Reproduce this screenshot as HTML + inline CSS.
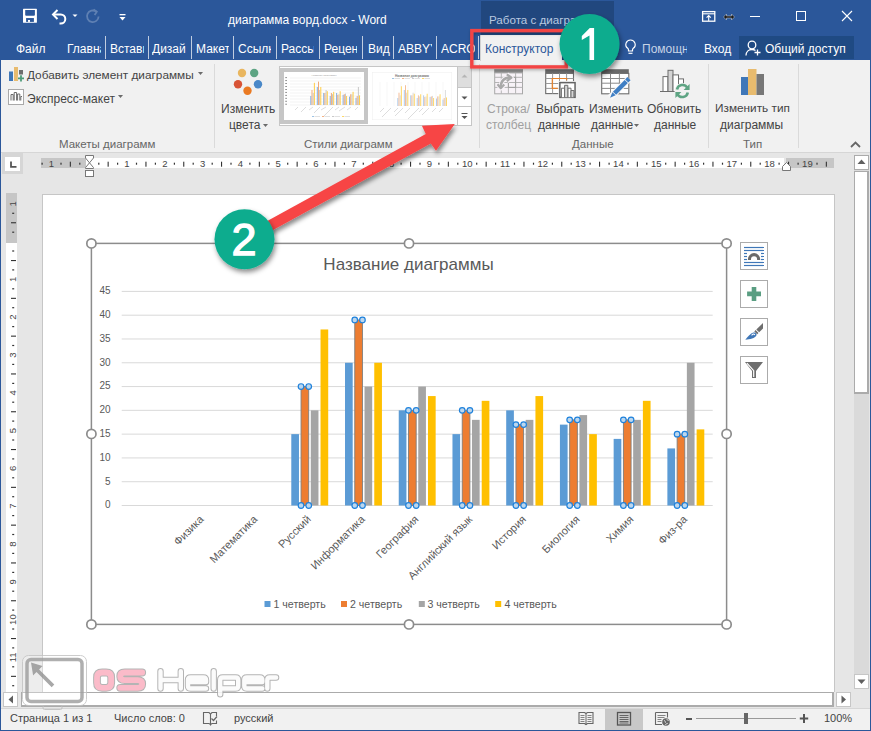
<!DOCTYPE html>
<html><head><meta charset="utf-8"><title>Word</title>
<style>
*{box-sizing:border-box}
html,body{margin:0;padding:0}
body{width:871px;height:731px;overflow:hidden;position:relative;background:#2b579a;font-family:"Liberation Sans",sans-serif;}
.a{position:absolute}
.t{position:absolute;white-space:nowrap;line-height:1}
.clip{overflow:hidden}
svg{position:absolute;overflow:visible}
</style></head><body>

<!-- ribbon bg -->
<div class="a" style="left:1px;top:60px;width:869px;height:93px;background:#f1f1f1;border-bottom:1px solid #d6d6d6"></div>
<!-- document workspace -->
<div class="a" style="left:1px;top:153px;width:869px;height:555px;background:#e6e6e6"></div>
<!-- page -->
<div class="a" style="left:42px;top:194px;width:793px;height:498px;background:#fff;border:1px solid #c6c6c6;border-bottom:none"></div>
<!-- status bar -->
<div class="a" style="left:1px;top:708px;width:869px;height:22px;background:#f1f1f1;border-top:1px solid #d6d6d6"></div>
<!-- tab selector -->
<div class="a" style="left:2px;top:153px;width:21px;height:21px;background:#d6d6d6"></div>
<div class="a" style="left:5px;top:157px;width:15px;height:14px;background:#fff"></div>
<svg style="left:10px;top:161px" width="7" height="7" viewBox="0 0 7 7"><path d="M1 0.5v5.3h5.5" fill="none" stroke="#555" stroke-width="1.8"/></svg>
<div class="a" style="left:41px;top:158px;width:44.5px;height:10px;background:#c6c6c6"></div>
<div class="a" style="left:786px;top:158px;width:48px;height:10px;background:#c6c6c6"></div>
<div class="a" style="left:86px;top:158px;width:698px;height:10px;background:#fff"></div>
<svg style="left:0;top:0" width="871" height="200" viewBox="0 0 871 200">
<rect x="41.5" y="162.7" width="1.2" height="2" fill="#333"/>
<text x="51.4" y="167" font-size="9.5" text-anchor="middle" fill="#444" font-family="Liberation Sans">1</text>
<rect x="60.4" y="162.7" width="1.2" height="2" fill="#333"/>
<rect x="69.8" y="161.7" width="1.1" height="5" fill="#333"/>
<rect x="79.2" y="162.7" width="1.2" height="2" fill="#333"/>
<rect x="98.2" y="162.7" width="1.2" height="2" fill="#333"/>
<rect x="107.6" y="161.7" width="1.1" height="5" fill="#333"/>
<rect x="117.0" y="162.7" width="1.2" height="2" fill="#333"/>
<text x="127.0" y="167" font-size="9.5" text-anchor="middle" fill="#444" font-family="Liberation Sans">1</text>
<rect x="135.9" y="162.7" width="1.2" height="2" fill="#333"/>
<rect x="145.4" y="161.7" width="1.1" height="5" fill="#333"/>
<rect x="154.8" y="162.7" width="1.2" height="2" fill="#333"/>
<text x="164.8" y="167" font-size="9.5" text-anchor="middle" fill="#444" font-family="Liberation Sans">2</text>
<rect x="173.8" y="162.7" width="1.2" height="2" fill="#333"/>
<rect x="183.2" y="161.7" width="1.1" height="5" fill="#333"/>
<rect x="192.6" y="162.7" width="1.2" height="2" fill="#333"/>
<text x="202.6" y="167" font-size="9.5" text-anchor="middle" fill="#444" font-family="Liberation Sans">3</text>
<rect x="211.6" y="162.7" width="1.2" height="2" fill="#333"/>
<rect x="221.0" y="161.7" width="1.1" height="5" fill="#333"/>
<rect x="230.4" y="162.7" width="1.2" height="2" fill="#333"/>
<text x="240.4" y="167" font-size="9.5" text-anchor="middle" fill="#444" font-family="Liberation Sans">4</text>
<rect x="249.3" y="162.7" width="1.2" height="2" fill="#333"/>
<rect x="258.8" y="161.7" width="1.1" height="5" fill="#333"/>
<rect x="268.2" y="162.7" width="1.2" height="2" fill="#333"/>
<text x="278.2" y="167" font-size="9.5" text-anchor="middle" fill="#444" font-family="Liberation Sans">5</text>
<rect x="287.1" y="162.7" width="1.2" height="2" fill="#333"/>
<rect x="296.6" y="161.7" width="1.1" height="5" fill="#333"/>
<rect x="306.1" y="162.7" width="1.2" height="2" fill="#333"/>
<text x="316.0" y="167" font-size="9.5" text-anchor="middle" fill="#444" font-family="Liberation Sans">6</text>
<rect x="324.9" y="162.7" width="1.2" height="2" fill="#333"/>
<rect x="334.4" y="161.7" width="1.1" height="5" fill="#333"/>
<rect x="343.8" y="162.7" width="1.2" height="2" fill="#333"/>
<text x="353.8" y="167" font-size="9.5" text-anchor="middle" fill="#444" font-family="Liberation Sans">7</text>
<rect x="362.7" y="162.7" width="1.2" height="2" fill="#333"/>
<rect x="372.2" y="161.7" width="1.1" height="5" fill="#333"/>
<rect x="381.6" y="162.7" width="1.2" height="2" fill="#333"/>
<text x="391.6" y="167" font-size="9.5" text-anchor="middle" fill="#444" font-family="Liberation Sans">8</text>
<rect x="400.5" y="162.7" width="1.2" height="2" fill="#333"/>
<rect x="410.0" y="161.7" width="1.1" height="5" fill="#333"/>
<rect x="419.4" y="162.7" width="1.2" height="2" fill="#333"/>
<text x="429.4" y="167" font-size="9.5" text-anchor="middle" fill="#444" font-family="Liberation Sans">9</text>
<rect x="438.3" y="162.7" width="1.2" height="2" fill="#333"/>
<rect x="447.8" y="161.7" width="1.1" height="5" fill="#333"/>
<rect x="457.2" y="162.7" width="1.2" height="2" fill="#333"/>
<text x="467.2" y="167" font-size="9.5" text-anchor="middle" fill="#444" font-family="Liberation Sans">10</text>
<rect x="476.1" y="162.7" width="1.2" height="2" fill="#333"/>
<rect x="485.6" y="161.7" width="1.1" height="5" fill="#333"/>
<rect x="495.0" y="162.7" width="1.2" height="2" fill="#333"/>
<text x="505.0" y="167" font-size="9.5" text-anchor="middle" fill="#444" font-family="Liberation Sans">11</text>
<rect x="513.9" y="162.7" width="1.2" height="2" fill="#333"/>
<rect x="523.4" y="161.7" width="1.1" height="5" fill="#333"/>
<rect x="532.9" y="162.7" width="1.2" height="2" fill="#333"/>
<text x="542.8" y="167" font-size="9.5" text-anchor="middle" fill="#444" font-family="Liberation Sans">12</text>
<rect x="551.8" y="162.7" width="1.2" height="2" fill="#333"/>
<rect x="561.2" y="161.7" width="1.1" height="5" fill="#333"/>
<rect x="570.6" y="162.7" width="1.2" height="2" fill="#333"/>
<text x="580.6" y="167" font-size="9.5" text-anchor="middle" fill="#444" font-family="Liberation Sans">13</text>
<rect x="589.5" y="162.7" width="1.2" height="2" fill="#333"/>
<rect x="599.0" y="161.7" width="1.1" height="5" fill="#333"/>
<rect x="608.5" y="162.7" width="1.2" height="2" fill="#333"/>
<text x="618.4" y="167" font-size="9.5" text-anchor="middle" fill="#444" font-family="Liberation Sans">14</text>
<rect x="627.4" y="162.7" width="1.2" height="2" fill="#333"/>
<rect x="636.8" y="161.7" width="1.1" height="5" fill="#333"/>
<rect x="646.2" y="162.7" width="1.2" height="2" fill="#333"/>
<text x="656.2" y="167" font-size="9.5" text-anchor="middle" fill="#444" font-family="Liberation Sans">15</text>
<rect x="665.1" y="162.7" width="1.2" height="2" fill="#333"/>
<rect x="674.6" y="161.7" width="1.1" height="5" fill="#333"/>
<rect x="684.0" y="162.7" width="1.2" height="2" fill="#333"/>
<text x="694.0" y="167" font-size="9.5" text-anchor="middle" fill="#444" font-family="Liberation Sans">16</text>
<rect x="703.0" y="162.7" width="1.2" height="2" fill="#333"/>
<rect x="712.4" y="161.7" width="1.1" height="5" fill="#333"/>
<rect x="721.9" y="162.7" width="1.2" height="2" fill="#333"/>
<text x="731.8" y="167" font-size="9.5" text-anchor="middle" fill="#444" font-family="Liberation Sans">17</text>
<rect x="740.8" y="162.7" width="1.2" height="2" fill="#333"/>
<rect x="750.2" y="161.7" width="1.1" height="5" fill="#333"/>
<rect x="759.6" y="162.7" width="1.2" height="2" fill="#333"/>
<text x="769.6" y="167" font-size="9.5" text-anchor="middle" fill="#444" font-family="Liberation Sans">18</text>
<rect x="778.5" y="162.7" width="1.2" height="2" fill="#333"/>
<rect x="788.0" y="161.7" width="1.1" height="5" fill="#333"/>
<rect x="797.5" y="162.7" width="1.2" height="2" fill="#333"/>
<text x="807.4" y="167" font-size="9.5" text-anchor="middle" fill="#444" font-family="Liberation Sans">19</text>
<rect x="816.4" y="162.7" width="1.2" height="2" fill="#333"/>
<rect x="825.8" y="161.7" width="1.1" height="5" fill="#333"/>
<path d="M85.5 155.5H93.5V158L89.5 162.8L93.5 167.6V168.5H85.5V167.6L89.5 162.8L85.5 158Z" fill="#fff" stroke="#777" stroke-width="1"/>
<rect x="85.5" y="170.5" width="8" height="6" fill="#fff" stroke="#777" stroke-width="1"/>
<path d="M782.5 170.5V166.5L786.5 162.5L790.5 166.5V170.5Z" fill="#fff" stroke="#777" stroke-width="1"/>
</svg>
<div class="a" style="left:6px;top:193px;width:11px;height:499px;background:#fff"></div>
<div class="a" style="left:6px;top:193px;width:11px;height:50px;background:#c6c6c6"></div>
<svg style="left:0;top:0" width="30" height="731" viewBox="0 0 30 731">
<text transform="translate(16 203.8) rotate(-90)" x="0" y="0" font-size="9.5" text-anchor="middle" fill="#444" font-family="Liberation Sans">1</text>
<rect x="12.2" y="212.7" width="2" height="1.2" fill="#333"/>
<rect x="11" y="222.2" width="5" height="1.1" fill="#333"/>
<rect x="12.2" y="231.6" width="2" height="1.2" fill="#333"/>
<rect x="12.2" y="250.4" width="2" height="1.2" fill="#333"/>
<rect x="11" y="260.0" width="5" height="1.1" fill="#333"/>
<rect x="12.2" y="269.3" width="2" height="1.2" fill="#333"/>
<text transform="translate(16 279.4) rotate(-90)" x="0" y="0" font-size="9.5" text-anchor="middle" fill="#444" font-family="Liberation Sans">1</text>
<rect x="12.2" y="288.2" width="2" height="1.2" fill="#333"/>
<rect x="11" y="297.8" width="5" height="1.1" fill="#333"/>
<rect x="12.2" y="307.1" width="2" height="1.2" fill="#333"/>
<text transform="translate(16 317.2) rotate(-90)" x="0" y="0" font-size="9.5" text-anchor="middle" fill="#444" font-family="Liberation Sans">2</text>
<rect x="12.2" y="326.0" width="2" height="1.2" fill="#333"/>
<rect x="11" y="335.6" width="5" height="1.1" fill="#333"/>
<rect x="12.2" y="344.9" width="2" height="1.2" fill="#333"/>
<text transform="translate(16 355.0) rotate(-90)" x="0" y="0" font-size="9.5" text-anchor="middle" fill="#444" font-family="Liberation Sans">3</text>
<rect x="12.2" y="363.8" width="2" height="1.2" fill="#333"/>
<rect x="11" y="373.4" width="5" height="1.1" fill="#333"/>
<rect x="12.2" y="382.8" width="2" height="1.2" fill="#333"/>
<text transform="translate(16 392.8) rotate(-90)" x="0" y="0" font-size="9.5" text-anchor="middle" fill="#444" font-family="Liberation Sans">4</text>
<rect x="12.2" y="401.6" width="2" height="1.2" fill="#333"/>
<rect x="11" y="411.2" width="5" height="1.1" fill="#333"/>
<rect x="12.2" y="420.5" width="2" height="1.2" fill="#333"/>
<text transform="translate(16 430.6) rotate(-90)" x="0" y="0" font-size="9.5" text-anchor="middle" fill="#444" font-family="Liberation Sans">5</text>
<rect x="12.2" y="439.4" width="2" height="1.2" fill="#333"/>
<rect x="11" y="449.0" width="5" height="1.1" fill="#333"/>
<rect x="12.2" y="458.3" width="2" height="1.2" fill="#333"/>
<text transform="translate(16 468.4) rotate(-90)" x="0" y="0" font-size="9.5" text-anchor="middle" fill="#444" font-family="Liberation Sans">6</text>
<rect x="12.2" y="477.2" width="2" height="1.2" fill="#333"/>
<rect x="11" y="486.8" width="5" height="1.1" fill="#333"/>
<rect x="12.2" y="496.1" width="2" height="1.2" fill="#333"/>
<text transform="translate(16 506.2) rotate(-90)" x="0" y="0" font-size="9.5" text-anchor="middle" fill="#444" font-family="Liberation Sans">7</text>
<rect x="12.2" y="515.0" width="2" height="1.2" fill="#333"/>
<rect x="11" y="524.6" width="5" height="1.1" fill="#333"/>
<rect x="12.2" y="533.9" width="2" height="1.2" fill="#333"/>
<text transform="translate(16 544.0) rotate(-90)" x="0" y="0" font-size="9.5" text-anchor="middle" fill="#444" font-family="Liberation Sans">8</text>
<rect x="12.2" y="552.8" width="2" height="1.2" fill="#333"/>
<rect x="11" y="562.4" width="5" height="1.1" fill="#333"/>
<rect x="12.2" y="571.8" width="2" height="1.2" fill="#333"/>
<text transform="translate(16 581.8) rotate(-90)" x="0" y="0" font-size="9.5" text-anchor="middle" fill="#444" font-family="Liberation Sans">9</text>
<rect x="12.2" y="590.6" width="2" height="1.2" fill="#333"/>
<rect x="11" y="600.2" width="5" height="1.1" fill="#333"/>
<rect x="12.2" y="609.5" width="2" height="1.2" fill="#333"/>
<text transform="translate(16 619.6) rotate(-90)" x="0" y="0" font-size="9.5" text-anchor="middle" fill="#444" font-family="Liberation Sans">10</text>
<rect x="12.2" y="628.4" width="2" height="1.2" fill="#333"/>
<rect x="11" y="638.0" width="5" height="1.1" fill="#333"/>
<rect x="12.2" y="647.3" width="2" height="1.2" fill="#333"/>
<text transform="translate(16 657.4) rotate(-90)" x="0" y="0" font-size="9.5" text-anchor="middle" fill="#444" font-family="Liberation Sans">11</text>
<rect x="12.2" y="666.2" width="2" height="1.2" fill="#333"/>
<rect x="11" y="675.8" width="5" height="1.1" fill="#333"/>
<rect x="12.2" y="685.1" width="2" height="1.2" fill="#333"/>
</svg>
<!-- vertical scrollbar -->
<div class="a" style="left:854px;top:155px;width:15px;height:534px;background:#dadada"></div>
<div class="a" style="left:854px;top:155px;width:15px;height:15px;background:#fff;border:1px solid #ababab"></div>
<svg style="left:857px;top:159px" width="9" height="6" viewBox="0 0 9 6"><path d="M0.5 5h8l-4-4.5z" fill="#5f5f5f"/></svg>
<div class="a" style="left:854px;top:171px;width:15px;height:223px;background:#fff;border:1px solid #ababab;border-width:1px 2px 2px 1px"></div>
<div class="a" style="left:854px;top:674px;width:15px;height:15px;background:#fff;border:1px solid #c6c6c6"></div>
<svg style="left:857px;top:679px" width="9" height="6" viewBox="0 0 9 6"><path d="M0.5 0.5h8l-4 4.5z" fill="#5f5f5f"/></svg>
<!-- horizontal scrollbar -->
<div class="a" style="left:1px;top:692px;width:853px;height:16px;background:#e6e6e6"></div>
<div class="a" style="left:3px;top:692px;width:15px;height:15px;background:#fff;border:1px solid #c6c6c6"></div>
<svg style="left:8px;top:695px" width="6" height="9" viewBox="0 0 6 9"><path d="M5 0.5v8l-4.5-4z" fill="#5f5f5f"/></svg>
<div class="a" style="left:21px;top:692px;width:813px;height:15px;background:#fff;border:1px solid #ababab;border-width:1px 2px 2px 1px"></div>
<div class="a" style="left:836px;top:692px;width:15px;height:15px;background:#fff;border:1px solid #c6c6c6"></div>
<svg style="left:841px;top:695px" width="6" height="9" viewBox="0 0 6 9"><path d="M0.5 0.5v8l4.5-4z" fill="#5f5f5f"/></svg>

<!-- ===== TITLE BAR ===== -->
<!-- save icon -->
<svg style="left:22px;top:8px" width="16" height="16" viewBox="0 0 16 16">
<rect x="1" y="0.75" width="13.9" height="14.1" rx="0.6" fill="#fff"/>
<path d="M3.2 2.1h9.7v5l-0.6 0.6h-8.5l-0.6-0.6z" fill="#2b579a"/>
<rect x="4.1" y="10.05" width="7.8" height="3.85" fill="#2b579a"/>
<rect x="6" y="12" width="2" height="1.9" fill="#fff"/>
</svg>
<!-- undo -->
<svg style="left:51px;top:8px" width="28" height="16" viewBox="0 0 28 16">
<path d="M3 6.5h6.8a4.5 4.5 0 0 1 0 9h-1.3" fill="none" stroke="#fff" stroke-width="2"/>
<path d="M6.5 2l-4.5 4.5 4.5 4.5" fill="none" stroke="#fff" stroke-width="2"/>
<path d="M21.5 6.5h5l-2.5 2.6z" fill="#fff"/>
</svg>
<!-- redo dim -->
<svg style="left:85px;top:8px" width="16" height="16" viewBox="0 0 16 16">
<path d="M11.2 3.6A5.8 5.8 0 1 0 13.6 8.5" fill="none" stroke="#5f80b3" stroke-width="1.8"/>
<path d="M8.6 1.4l3.2 2.4-2.2 3.2" fill="none" stroke="#5f80b3" stroke-width="1.8"/>
</svg>
<!-- customize -->
<svg style="left:119px;top:14px" width="7" height="8" viewBox="0 0 7 8">
<rect x="0.5" y="0" width="6" height="1.3" fill="#fff"/>
<path d="M0.5 3h6l-3 3.5z" fill="#fff"/>
</svg>
<div class="t" style="left:228px;top:14px;font-size:12px;color:#fff">диаграмма ворд.docx - Word</div>

<!-- contextual header -->
<div class="a" style="left:481px;top:1px;width:133px;height:34px;background:#21477e"></div>
<div class="t clip" style="left:489px;top:14px;width:111px;font-size:11.6px;color:#b9c9e0">Работа с диаграммами</div>

<!-- window controls -->
<svg style="left:701px;top:10px" width="16" height="13" viewBox="0 0 16 13">
<rect x="1.6" y="1.6" width="12.2" height="9.6" fill="none" stroke="#fff" stroke-width="1.3"/>
<line x1="1.5" y1="3.8" x2="14" y2="3.8" stroke="#fff" stroke-width="1.1"/>
<path d="M7.7 11V5.6M5.6 7.6L7.7 5.5 9.8 7.6" fill="none" stroke="#fff" stroke-width="1.1"/>
</svg>
<svg style="left:723px;top:13px" width="12" height="8" viewBox="0 0 12 8">
<path d="M0.5 4l3-3v2h5v-2l3 3-3 3v-2h-5v2z" fill="#1a1a1a" stroke="#fff" stroke-width="0.4"/>
</svg>
<div class="a" style="left:750px;top:16px;width:10px;height:1px;background:#fff"></div>
<div class="a" style="left:796px;top:11px;width:10px;height:10px;border:1px solid #fff"></div>
<svg style="left:841px;top:10px" width="12" height="12" viewBox="0 0 12 12">
<path d="M1 1l10 10M11 1l-10 10" stroke="#fff" stroke-width="1.1"/>
</svg>

<!-- ===== TABS ROW ===== -->
<div class="t" style="left:16px;top:43px;font-size:12px;color:#fff">Файл</div>
<div class="t clip" style="left:67px;top:43px;width:34px;font-size:12px;color:#fff">Главная</div>
<div class="t clip" style="left:110px;top:43px;width:34px;font-size:12px;color:#fff">Вставка</div>
<div class="t clip" style="left:152px;top:43px;width:33.5px;font-size:12px;color:#fff">Дизайн</div>
<div class="t clip" style="left:196px;top:43px;width:33px;font-size:12px;color:#fff">Макет</div>
<div class="t clip" style="left:238px;top:43px;width:33px;font-size:12px;color:#fff">Ссылки</div>
<div class="t clip" style="left:281px;top:43px;width:33px;font-size:12px;color:#fff">Рассылки</div>
<div class="t clip" style="left:324px;top:43px;width:33px;font-size:12px;color:#fff">Рецензирование</div>
<div class="t" style="left:368px;top:43px;font-size:12px;color:#fff">Вид</div>
<div class="t clip" style="left:398px;top:43px;width:34px;font-size:12px;color:#fff">ABBYY FineReader</div>
<div class="t clip" style="left:441px;top:43px;width:34px;font-size:12px;color:#fff">ACROBAT</div>
<!-- separators -->
<div class="a" style="left:105px;top:36px;width:1px;height:23px;background:#c0cde0"></div>
<div class="a" style="left:148px;top:36px;width:1px;height:23px;background:#c0cde0"></div>
<div class="a" style="left:191px;top:36px;width:1px;height:23px;background:#c0cde0"></div>
<div class="a" style="left:233px;top:36px;width:1px;height:23px;background:#c0cde0"></div>
<div class="a" style="left:276px;top:36px;width:1px;height:23px;background:#c0cde0"></div>
<div class="a" style="left:319px;top:36px;width:1px;height:23px;background:#c0cde0"></div>
<div class="a" style="left:362px;top:36px;width:1px;height:23px;background:#c0cde0"></div>
<div class="a" style="left:393px;top:36px;width:1px;height:23px;background:#c0cde0"></div>
<div class="a" style="left:436px;top:36px;width:1px;height:23px;background:#c0cde0"></div>
<div class="a" style="left:478px;top:36px;width:1px;height:23px;background:#c0cde0"></div>
<!-- Конструктор tab -->
<div class="a" style="left:480px;top:35px;width:82px;height:26px;background:#f1f1f1;border-left:1px solid #d2d2d2"></div>
<div class="t" style="left:485px;top:43px;font-size:12px;color:#2b579a">Конструктор</div>
<div class="a" style="left:562px;top:35px;width:52px;height:25px;background:#21477e"></div>

<!-- help -->
<svg style="left:624px;top:39px" width="13" height="16" viewBox="0 0 13 16">
<path d="M6.5 1a4.6 4.6 0 0 0-2.8 8.3c.6.5.8 1 .8 1.7v1h4v-1c0-.7.2-1.2.8-1.7A4.6 4.6 0 0 0 6.5 1z" fill="none" stroke="#fff" stroke-width="1.2"/>
<line x1="4.5" y1="14.3" x2="8.5" y2="14.3" stroke="#fff" stroke-width="1.2"/>
</svg>
<div class="t clip" style="left:642px;top:43px;width:45px;font-size:12px;color:#c7d3e6">Помощник</div>
<div class="t" style="left:704px;top:43px;font-size:12px;color:#fff">Вход</div>
<div class="a" style="left:739px;top:36px;width:115px;height:23px;background:#1f4a83"></div>
<svg style="left:745px;top:40px" width="17" height="16" viewBox="0 0 17 16">
<circle cx="7" cy="5" r="3.8" fill="none" stroke="#fff" stroke-width="1.3"/>
<path d="M1 15.5c0-3.5 2.5-6 6-6 1.5 0 2.6.4 3.5 1" fill="none" stroke="#fff" stroke-width="1.3"/>
<path d="M12.5 9.5v6M9.5 12.5h6" stroke="#fff" stroke-width="1.3"/>
</svg>
<div class="t" style="left:765px;top:43px;font-size:12px;color:#fff">Общий доступ</div>

<!-- ===== RIBBON ===== -->
<!-- Добавить элемент диаграммы -->
<svg style="left:8px;top:66px" width="17" height="16" viewBox="0 0 17 16">
<rect x="1" y="5.5" width="4" height="9.5" fill="#3f77b8"/>
<rect x="6" y="1" width="4" height="14" fill="#e8bb6e"/>
<rect x="11" y="4" width="4" height="4.5" fill="#6d6d6d"/>
<path d="M13 9v6.5M9.8 12.3h6.4" stroke="#f1f1f1" stroke-width="3.6"/><path d="M13 9.2v6.2M10 12.3h6" stroke="#4f9c7a" stroke-width="1.8"/>
</svg>
<div class="t" style="left:27px;top:70px;font-size:11.8px;color:#444">Добавить элемент диаграммы</div>
<svg style="left:198px;top:72px" width="6" height="4" viewBox="0 0 6 4"><path d="M0 0h5l-2.5 3z" fill="#6b6b6b"/></svg>
<!-- Экспресс-макет -->
<svg style="left:8px;top:89px" width="17" height="17" viewBox="0 0 17 17">
<rect x="0.5" y="0.5" width="15" height="15" fill="#fff" stroke="#a9a9a9"/>
<path d="M3 11.5v-6h2.2v6M6.2 11.5v-8h2.4v8M9.6 11.5v-6.5h2.2v6.5M12.8 11.5v-4h1.2" fill="none" stroke="#6a6a6a" stroke-width="1"/>
</svg>
<div class="t" style="left:27px;top:93px;font-size:12px;color:#444">Экспресс-макет</div>
<svg style="left:118px;top:95px" width="6" height="4" viewBox="0 0 6 4"><path d="M0 0h5l-2.5 3z" fill="#6b6b6b"/></svg>
<div class="t" style="left:59px;top:139px;font-size:11.5px;color:#666">Макеты диаграмм</div>
<div class="a" style="left:214px;top:64px;width:1px;height:84px;background:#dadada"></div>

<!-- Изменить цвета -->
<svg style="left:230px;top:64px" width="34" height="32" viewBox="0 0 34 32">
<circle cx="12" cy="9" r="4.2" fill="#e9b65f"/>
<circle cx="24.2" cy="9" r="4.2" fill="#5ea483"/>
<circle cx="8" cy="20.2" r="4.2" fill="#d85436"/>
<circle cx="28" cy="20.2" r="4.2" fill="#4a88c8"/>
<circle cx="17.5" cy="26.7" r="4.2" fill="#ea7a22"/>
</svg>
<div class="t" style="left:221px;top:103px;font-size:12px;color:#444">Изменить</div>
<div class="t" style="left:229px;top:119px;font-size:12px;color:#444">цвета</div>
<svg style="left:263px;top:124px" width="6" height="4" viewBox="0 0 6 4"><path d="M0 0h5l-2.5 3z" fill="#6b6b6b"/></svg>

<!-- Gallery -->
<div class="a" style="left:279px;top:66px;width:193px;height:60px;background:#fff;border:1px solid #c6c6c6"></div>
<div class="a" style="left:280px;top:68px;width:88px;height:56px;background:#c6c6c6"></div>
<div class="a" style="left:284px;top:72px;width:80px;height:48px;background:#fff"></div>
<svg style="left:284px;top:72px" width="80" height="48" viewBox="0 0 80 48">
<text x="40" y="4" font-size="2.5" text-anchor="middle" fill="#999" font-family="Liberation Sans">Название диаграммы</text>
<g stroke="#e6e6e6" stroke-width="0.5">
<line x1="6" y1="6" x2="77" y2="6"/><line x1="6" y1="9" x2="77" y2="9"/><line x1="6" y1="12" x2="77" y2="12"/>
<line x1="6" y1="15" x2="77" y2="15"/><line x1="6" y1="18" x2="77" y2="18"/><line x1="6" y1="21" x2="77" y2="21"/>
<line x1="6" y1="24" x2="77" y2="24"/><line x1="6" y1="27" x2="77" y2="27"/><line x1="6" y1="30" x2="77" y2="30"/><line x1="6" y1="33" x2="77" y2="33"/>
</g>
<g><rect x="1.3" y="5.20" width="1.6" height="0.9" fill="#777"/><rect x="1.3" y="8.15" width="1.6" height="0.9" fill="#777"/><rect x="1.3" y="11.10" width="1.6" height="0.9" fill="#777"/><rect x="1.3" y="14.05" width="1.6" height="0.9" fill="#777"/><rect x="1.3" y="17.00" width="1.6" height="0.9" fill="#777"/><rect x="1.3" y="19.95" width="1.6" height="0.9" fill="#777"/><rect x="1.3" y="22.90" width="1.6" height="0.9" fill="#777"/><rect x="1.3" y="25.85" width="1.6" height="0.9" fill="#777"/><rect x="1.3" y="28.80" width="1.6" height="0.9" fill="#777"/><rect x="1.3" y="31.75" width="1.6" height="0.9" fill="#777"/></g>
<g><rect x="26.37" y="24.00" width="0.92" height="9.00" fill="#7aa9dc"/><rect x="27.54" y="18.00" width="0.92" height="15.00" fill="#f0a36c"/><rect x="28.72" y="21.00" width="0.92" height="12.00" fill="#c4c4c4"/><rect x="29.89" y="10.80" width="0.92" height="22.20" fill="#ffcb3a"/><rect x="32.83" y="15.00" width="0.92" height="18.00" fill="#7aa9dc"/><rect x="34.00" y="9.60" width="0.92" height="23.40" fill="#f0a36c"/><rect x="35.17" y="18.00" width="0.92" height="15.00" fill="#c4c4c4"/><rect x="36.34" y="15.00" width="0.92" height="18.00" fill="#ffcb3a"/><rect x="39.28" y="21.00" width="0.92" height="12.00" fill="#7aa9dc"/><rect x="40.45" y="21.00" width="0.92" height="12.00" fill="#f0a36c"/><rect x="41.62" y="18.00" width="0.92" height="15.00" fill="#c4c4c4"/><rect x="42.80" y="19.20" width="0.92" height="13.80" fill="#ffcb3a"/><rect x="45.74" y="24.00" width="0.92" height="9.00" fill="#7aa9dc"/><rect x="46.91" y="21.00" width="0.92" height="12.00" fill="#f0a36c"/><rect x="48.08" y="22.20" width="0.92" height="10.80" fill="#c4c4c4"/><rect x="49.25" y="19.80" width="0.92" height="13.20" fill="#ffcb3a"/><rect x="52.19" y="21.00" width="0.92" height="12.00" fill="#7aa9dc"/><rect x="53.36" y="22.80" width="0.92" height="10.20" fill="#f0a36c"/><rect x="54.53" y="22.20" width="0.92" height="10.80" fill="#c4c4c4"/><rect x="55.70" y="19.20" width="0.92" height="13.80" fill="#ffcb3a"/><rect x="58.65" y="22.80" width="0.92" height="10.20" fill="#7aa9dc"/><rect x="59.82" y="22.20" width="0.92" height="10.80" fill="#f0a36c"/><rect x="60.99" y="21.60" width="0.92" height="11.40" fill="#c4c4c4"/><rect x="62.16" y="24.00" width="0.92" height="9.00" fill="#ffcb3a"/><rect x="65.10" y="24.60" width="0.92" height="8.40" fill="#7aa9dc"/><rect x="66.27" y="22.20" width="0.92" height="10.80" fill="#f0a36c"/><rect x="67.44" y="22.20" width="0.92" height="10.80" fill="#c4c4c4"/><rect x="68.61" y="19.80" width="0.92" height="13.20" fill="#ffcb3a"/><rect x="71.56" y="25.80" width="0.92" height="7.20" fill="#7aa9dc"/><rect x="72.73" y="24.00" width="0.92" height="9.00" fill="#f0a36c"/><rect x="73.90" y="15.00" width="0.92" height="18.00" fill="#c4c4c4"/><rect x="75.07" y="23.40" width="0.92" height="9.60" fill="#ffcb3a"/></g>
<g stroke="#bbb" stroke-width="0.5">
<line x1="11" y1="38" x2="14" y2="35"/><line x1="17" y1="40" x2="22" y2="35"/><line x1="25" y1="38" x2="29" y2="35"/><line x1="30" y1="41" x2="36" y2="35"/>
<line x1="37" y1="38" x2="42" y2="35"/><line x1="40" y1="44" x2="49" y2="35"/><line x1="51" y1="38" x2="55" y2="35"/><line x1="55" y1="39" x2="61" y2="35"/><line x1="63" y1="38" x2="67" y2="35"/><line x1="71" y1="38" x2="74" y2="35"/>
</g>
<g><rect x="28" y="44" width="2" height="1" fill="#9cc3e5"/><rect x="38" y="44" width="2" height="1" fill="#f4b183"/><rect x="48" y="44" width="2" height="1" fill="#c9c9c9"/><rect x="58" y="44" width="2" height="1" fill="#ffd966"/>
<g stroke="#ccc" stroke-width="0.6"><line x1="30.5" y1="44.5" x2="36" y2="44.5"/><line x1="40.5" y1="44.5" x2="46" y2="44.5"/><line x1="50.5" y1="44.5" x2="56" y2="44.5"/><line x1="60.5" y1="44.5" x2="66" y2="44.5"/></g></g>
</svg>
<svg style="left:372px;top:72px" width="80" height="48" viewBox="0 0 80 48">
<rect x="0.25" y="0.25" width="79.5" height="47.5" fill="none" stroke="#eee" stroke-width="0.5"/>
<text x="40" y="4.5" font-size="3.2" text-anchor="middle" fill="#777" font-family="Liberation Sans" font-weight="bold">Название диаграммы</text>
<g><rect x="20" y="6" width="2" height="1" fill="#9cc3e5"/><rect x="30" y="6" width="2" height="1" fill="#f4b183"/><rect x="40" y="6" width="2" height="1" fill="#c9c9c9"/><rect x="50" y="6" width="2" height="1" fill="#ffd966"/>
<g stroke="#ccc" stroke-width="0.6"><line x1="22.5" y1="6.5" x2="28" y2="6.5"/><line x1="32.5" y1="6.5" x2="38" y2="6.5"/><line x1="42.5" y1="6.5" x2="48" y2="6.5"/><line x1="52.5" y1="6.5" x2="58" y2="6.5"/></g></g>
<g stroke="#eee" stroke-width="0.5">
<line x1="8" y1="10" x2="8" y2="34"/><line x1="15" y1="10" x2="15" y2="34"/><line x1="22" y1="10" x2="22" y2="34"/><line x1="29" y1="10" x2="29" y2="34"/><line x1="36" y1="10" x2="36" y2="34"/><line x1="43" y1="10" x2="43" y2="34"/><line x1="50" y1="10" x2="50" y2="34"/><line x1="57" y1="10" x2="57" y2="34"/><line x1="64" y1="10" x2="64" y2="34"/><line x1="71" y1="10" x2="71" y2="34"/>
</g>
<g><rect x="25.37" y="26.00" width="0.92" height="8.00" fill="#a9c8ea"/><rect x="26.54" y="20.67" width="0.92" height="13.33" fill="#f4b990"/><rect x="27.72" y="23.33" width="0.92" height="10.67" fill="#d8d8d8"/><rect x="28.89" y="14.27" width="0.92" height="19.73" fill="#ffd45a"/><rect x="31.83" y="18.00" width="0.92" height="16.00" fill="#a9c8ea"/><rect x="33.00" y="13.20" width="0.92" height="20.80" fill="#f4b990"/><rect x="34.17" y="20.67" width="0.92" height="13.33" fill="#d8d8d8"/><rect x="35.34" y="18.00" width="0.92" height="16.00" fill="#ffd45a"/><rect x="38.28" y="23.33" width="0.92" height="10.67" fill="#a9c8ea"/><rect x="39.45" y="23.33" width="0.92" height="10.67" fill="#f4b990"/><rect x="40.62" y="20.67" width="0.92" height="13.33" fill="#d8d8d8"/><rect x="41.80" y="21.73" width="0.92" height="12.27" fill="#ffd45a"/><rect x="44.74" y="26.00" width="0.92" height="8.00" fill="#a9c8ea"/><rect x="45.91" y="23.33" width="0.92" height="10.67" fill="#f4b990"/><rect x="47.08" y="24.40" width="0.92" height="9.60" fill="#d8d8d8"/><rect x="48.25" y="22.27" width="0.92" height="11.73" fill="#ffd45a"/><rect x="51.19" y="23.33" width="0.92" height="10.67" fill="#a9c8ea"/><rect x="52.36" y="24.93" width="0.92" height="9.07" fill="#f4b990"/><rect x="53.53" y="24.40" width="0.92" height="9.60" fill="#d8d8d8"/><rect x="54.70" y="21.73" width="0.92" height="12.27" fill="#ffd45a"/><rect x="57.65" y="24.93" width="0.92" height="9.07" fill="#a9c8ea"/><rect x="58.82" y="24.40" width="0.92" height="9.60" fill="#f4b990"/><rect x="59.99" y="23.87" width="0.92" height="10.13" fill="#d8d8d8"/><rect x="61.16" y="26.00" width="0.92" height="8.00" fill="#ffd45a"/><rect x="64.10" y="26.53" width="0.92" height="7.47" fill="#a9c8ea"/><rect x="65.27" y="24.40" width="0.92" height="9.60" fill="#f4b990"/><rect x="66.44" y="24.40" width="0.92" height="9.60" fill="#d8d8d8"/><rect x="67.61" y="22.27" width="0.92" height="11.73" fill="#ffd45a"/><rect x="70.56" y="27.60" width="0.92" height="6.40" fill="#a9c8ea"/><rect x="71.73" y="26.00" width="0.92" height="8.00" fill="#f4b990"/><rect x="72.90" y="18.00" width="0.92" height="16.00" fill="#d8d8d8"/><rect x="74.07" y="25.47" width="0.92" height="8.53" fill="#ffd45a"/></g>
<g stroke="#bbb" stroke-width="0.5">
<line x1="8" y1="40" x2="12" y2="36"/><line x1="10" y1="45" x2="19" y2="36"/><line x1="22" y1="40" x2="26" y2="36"/><line x1="23" y1="44" x2="31" y2="36"/>
<line x1="33" y1="41" x2="38" y2="36"/><line x1="36" y1="47" x2="47" y2="36"/><line x1="47" y1="40" x2="51" y2="36"/><line x1="50" y1="43" x2="57" y2="36"/><line x1="60" y1="40" x2="64" y2="36"/><line x1="67" y1="40" x2="71" y2="36"/>
</g>
</svg>
<!-- gallery scroll buttons -->
<div class="a" style="left:457px;top:66px;width:15px;height:22px;background:#dedede;border:1px solid #c6c6c6"></div>
<div class="a" style="left:457px;top:87px;width:15px;height:20px;background:#fff;border:1px solid #c6c6c6"></div>
<div class="a" style="left:457px;top:106px;width:15px;height:20px;background:#fff;border:1px solid #c6c6c6"></div>
<svg style="left:461px;top:74px" width="7" height="4" viewBox="0 0 7 4"><path d="M0.5 3.5h6l-3-3z" fill="#b5b5b5"/></svg>
<svg style="left:461px;top:96px" width="7" height="4" viewBox="0 0 7 4"><path d="M0.5 0.5h6l-3 3z" fill="#555"/></svg>
<svg style="left:461px;top:113px" width="7" height="7" viewBox="0 0 7 7"><rect x="0.5" y="0" width="6" height="1" fill="#555"/><path d="M0.5 3h6l-3 3z" fill="#555"/></svg>
<div class="t" style="left:304px;top:139px;font-size:11.5px;color:#666">Стили диаграмм</div>
<div class="a" style="left:479px;top:64px;width:1px;height:84px;background:#dadada"></div>

<!-- Строка/столбец (disabled) -->
<svg style="left:493px;top:69px" width="31" height="27" viewBox="0 0 31 27">
<rect x="1.2" y="0.2" width="28.8" height="3.8" fill="#8e8e8e"/>
<rect x="1.7" y="3.9" width="27.8" height="20.9" fill="#f7f2f7" stroke="#a8a8a8" stroke-width="1"/>
<g stroke="#b4b4b4" stroke-width="1"><line x1="1.7" y1="8.3" x2="29.5" y2="8.3"/><line x1="1.7" y1="13.5" x2="29.5" y2="13.5"/><line x1="1.7" y1="18.4" x2="29.5" y2="18.4"/>
<line x1="8.3" y1="3.9" x2="8.3" y2="24.8"/><line x1="15.4" y1="3.9" x2="15.4" y2="24.8"/><line x1="22.6" y1="3.9" x2="22.6" y2="24.8"/></g>
<rect x="15.4" y="8.3" width="7.2" height="10.1" fill="none" stroke="#a0a0a0" stroke-width="1"/>
<g fill="none" stroke-linejoin="round" stroke-linecap="butt">
<path d="M7.8 18.5C7.8 12 11 8.6 17.5 8.6M13.8 5.3L18.5 8.7L13.8 12.2M4.5 15.3L7.8 19.2L11.3 15.6" stroke="#f7f2f7" stroke-width="4.4"/>
<path d="M7.8 18.5C7.8 12 11 8.6 17.5 8.6" stroke="#a9a9a9" stroke-width="2.5"/>
<path d="M13.8 5.3L18.5 8.7L13.8 12.2M4.5 15.3L7.8 19.2L11.3 15.6" stroke="#a9a9a9" stroke-width="2.1"/>
</g>
</svg>
<div class="t" style="left:487px;top:103px;font-size:12px;color:#a0a0a0">Строка/</div>
<div class="t" style="left:486px;top:119px;font-size:12px;color:#a0a0a0">столбец</div>
<!-- Выбрать данные -->
<svg style="left:545px;top:68px" width="33" height="31" viewBox="0 0 33 31">
<rect x="0.2" y="1.2" width="28.8" height="4.3" fill="#6a6a6a"/>
<rect x="0.7" y="5.4" width="27.8" height="20.2" fill="#fff" stroke="#6d6d6d" stroke-width="1.1"/>
<g stroke="#9a9a9a" stroke-width="1"><line x1="0.7" y1="10.5" x2="28.5" y2="10.5"/><line x1="0.7" y1="15.5" x2="28.5" y2="15.5"/><line x1="0.7" y1="20.4" x2="28.5" y2="20.4"/>
<line x1="7.6" y1="5.4" x2="7.6" y2="25.6"/><line x1="14.5" y1="5.4" x2="14.5" y2="25.6"/><line x1="21.6" y1="5.4" x2="21.6" y2="25.6"/></g>
<path d="M21.6 12.3V10.5H7.3V20.4H12.7" fill="none" stroke="#e8832c" stroke-width="1.2"/>
<rect x="14.85" y="14.65" width="15.2" height="14.7" fill="#fff" stroke="#f1f1f1" stroke-width="3.2"/><rect x="14.85" y="14.65" width="15.2" height="14.7" fill="#fff" stroke="#646464" stroke-width="1.5"/>
<path d="M16.4 29.3V20.2H19.6V29.3M22.8 29.3V20.2H26V29.3" fill="#fff" stroke="#6d6d6d" stroke-width="1"/>
<path d="M19.6 29.3V17.3H22.8V29.3M26 29.3V22.5H28.9V29.3" fill="#d6d6d6" stroke="#6d6d6d" stroke-width="1"/>
</svg>
<div class="t" style="left:536px;top:103px;font-size:12px;color:#444">Выбрать</div>
<div class="t" style="left:538px;top:119px;font-size:12px;color:#444">данные</div>
<!-- Изменить данные -->
<svg style="left:600px;top:68px" width="32" height="31" viewBox="0 0 32 31">
<rect x="1.2" y="1.2" width="27.6" height="4.3" fill="#6a6a6a"/>
<rect x="1.7" y="5.4" width="27.1" height="20.4" fill="#fff" stroke="#6d6d6d" stroke-width="1.1"/>
<g stroke="#8a8a8a" stroke-width="1"><line x1="1.7" y1="10.5" x2="28.8" y2="10.5"/><line x1="1.7" y1="15.2" x2="28.8" y2="15.2"/><line x1="1.7" y1="20.4" x2="28.8" y2="20.4"/>
<line x1="10.5" y1="5.4" x2="10.5" y2="25.8"/><line x1="19.4" y1="5.4" x2="19.4" y2="25.8"/></g>
<path d="M29 10.7L10 29.8" stroke="#f7f7f7" stroke-width="6.5"/>
<path d="M29 10.7L26.74 12.97M26.25 13.47L14.55 25.23" stroke="#3f7fc4" stroke-width="4.5"/>
<path d="M15.65 27.32L12.46 24.14L10.04 29.77Z" fill="#3f7fc4"/>
</svg>
<div class="t" style="left:589px;top:103px;font-size:12px;color:#444">Изменить</div>
<div class="t" style="left:591px;top:119px;font-size:12px;color:#444">данные</div>
<svg style="left:634px;top:124px" width="6" height="4" viewBox="0 0 6 4"><path d="M0 0h5l-2.5 3z" fill="#6b6b6b"/></svg>
<!-- Обновить данные -->
<svg style="left:659px;top:69px" width="32" height="30" viewBox="0 0 32 30">
<path d="M1 22.5h23" stroke="#6d6d6d" stroke-width="1"/>
<rect x="4" y="7.6" width="5" height="14.9" fill="#fff" stroke="#6d6d6d" stroke-width="1"/>
<rect x="9" y="1.3" width="5" height="21.2" fill="#d4d4d4" stroke="#6d6d6d" stroke-width="1"/>
<rect x="14" y="5.9" width="5.5" height="16.6" fill="#fff" stroke="#6d6d6d" stroke-width="1"/>
<rect x="19.5" y="9.9" width="5" height="12.6" fill="#fff" stroke="#6d6d6d" stroke-width="1"/>
<circle cx="23.5" cy="22" r="8" fill="#f1f1f1"/>
<path d="M18 20.5a5.6 5.6 0 0 1 10.3-1.8M28.8 23.5a5.6 5.6 0 0 1-10.3 1.8" fill="none" stroke="#5ea483" stroke-width="2.6"/>
<path d="M30.6 15v6h-6zM16.4 29v-6h6z" fill="#5ea483"/>
</svg>
<div class="t" style="left:647px;top:103px;font-size:12px;color:#444">Обновить</div>
<div class="t" style="left:654px;top:119px;font-size:12px;color:#444">данные</div>
<div class="t" style="left:572px;top:139px;font-size:11.5px;color:#666">Данные</div>
<div class="a" style="left:708px;top:64px;width:1px;height:84px;background:#dadada"></div>
<!-- Изменить тип -->
<svg style="left:740px;top:68px" width="25" height="28" viewBox="0 0 25 28">
<rect x="1" y="9" width="7" height="18" fill="#3f77b8"/>
<rect x="8" y="1" width="8.5" height="26" fill="#e8bb6e"/>
<rect x="16.5" y="6" width="7.5" height="21" fill="#777"/>
</svg>
<div class="t" style="left:715px;top:103px;font-size:11.8px;color:#444">Изменить тип</div>
<div class="t" style="left:720px;top:119px;font-size:12px;color:#444">диаграммы</div>
<div class="t" style="left:743px;top:139px;font-size:11.5px;color:#666">Тип</div>
<div class="a" style="left:798px;top:64px;width:1px;height:84px;background:#dadada"></div>
<svg style="left:850px;top:141px" width="11" height="7" viewBox="0 0 11 7"><path d="M1 6l4.5-4.5L10 6" fill="none" stroke="#666" stroke-width="1.8"/></svg>

<svg style="left:0;top:0" width="871" height="731" viewBox="0 0 871 731">
<text x="408.5" y="270" font-size="17" text-anchor="middle" fill="#595959" font-family="Liberation Sans">Название диаграммы</text>
<rect x="121.7" y="505.00" width="591.0" height="1" fill="#d9d9d9"/>
<text x="110.6" y="508.40" font-size="10" text-anchor="end" fill="#595959" font-family="Liberation Sans">0</text>
<rect x="121.7" y="481.21" width="591.0" height="1" fill="#d9d9d9"/>
<text x="110.6" y="484.61" font-size="10" text-anchor="end" fill="#595959" font-family="Liberation Sans">5</text>
<rect x="121.7" y="457.42" width="591.0" height="1" fill="#d9d9d9"/>
<text x="110.6" y="460.82" font-size="10" text-anchor="end" fill="#595959" font-family="Liberation Sans">10</text>
<rect x="121.7" y="433.63" width="591.0" height="1" fill="#d9d9d9"/>
<text x="110.6" y="437.03" font-size="10" text-anchor="end" fill="#595959" font-family="Liberation Sans">15</text>
<rect x="121.7" y="409.84" width="591.0" height="1" fill="#d9d9d9"/>
<text x="110.6" y="413.24" font-size="10" text-anchor="end" fill="#595959" font-family="Liberation Sans">20</text>
<rect x="121.7" y="386.06" width="591.0" height="1" fill="#d9d9d9"/>
<text x="110.6" y="389.46" font-size="10" text-anchor="end" fill="#595959" font-family="Liberation Sans">25</text>
<rect x="121.7" y="362.27" width="591.0" height="1" fill="#d9d9d9"/>
<text x="110.6" y="365.67" font-size="10" text-anchor="end" fill="#595959" font-family="Liberation Sans">30</text>
<rect x="121.7" y="338.48" width="591.0" height="1" fill="#d9d9d9"/>
<text x="110.6" y="341.88" font-size="10" text-anchor="end" fill="#595959" font-family="Liberation Sans">35</text>
<rect x="121.7" y="314.69" width="591.0" height="1" fill="#d9d9d9"/>
<text x="110.6" y="318.09" font-size="10" text-anchor="end" fill="#595959" font-family="Liberation Sans">40</text>
<rect x="121.7" y="290.90" width="591.0" height="1" fill="#d9d9d9"/>
<text x="110.6" y="294.30" font-size="10" text-anchor="end" fill="#595959" font-family="Liberation Sans">45</text>
<text transform="translate(204.3 520) rotate(-45)" text-anchor="end" font-size="11" fill="#595959" font-family="Liberation Sans">Физика</text>
<text transform="translate(258.0 520) rotate(-45)" text-anchor="end" font-size="11" fill="#595959" font-family="Liberation Sans">Математика</text>
<text transform="translate(311.7 520) rotate(-45)" text-anchor="end" font-size="11" fill="#595959" font-family="Liberation Sans">Русский</text>
<rect x="291.29" y="434.13" width="7.68" height="71.37" fill="#5b9bd5"/>
<rect x="301.03" y="386.56" width="7.68" height="118.94" fill="#ed7d31" stroke="#7f7f7f" stroke-width="0.9"/>
<rect x="310.78" y="410.34" width="7.68" height="95.16" fill="#a5a5a5"/>
<rect x="320.53" y="329.46" width="7.68" height="176.04" fill="#ffc000"/>
<text transform="translate(365.5 520) rotate(-45)" text-anchor="end" font-size="11" fill="#595959" font-family="Liberation Sans">Информатика</text>
<rect x="345.01" y="362.77" width="7.68" height="142.73" fill="#5b9bd5"/>
<rect x="354.76" y="319.95" width="7.68" height="185.55" fill="#ed7d31" stroke="#7f7f7f" stroke-width="0.9"/>
<rect x="364.51" y="386.56" width="7.68" height="118.94" fill="#a5a5a5"/>
<rect x="374.26" y="362.77" width="7.68" height="142.73" fill="#ffc000"/>
<text transform="translate(419.2 520) rotate(-45)" text-anchor="end" font-size="11" fill="#595959" font-family="Liberation Sans">География</text>
<rect x="398.74" y="410.34" width="7.68" height="95.16" fill="#5b9bd5"/>
<rect x="408.49" y="410.34" width="7.68" height="95.16" fill="#ed7d31" stroke="#7f7f7f" stroke-width="0.9"/>
<rect x="418.24" y="386.56" width="7.68" height="118.94" fill="#a5a5a5"/>
<rect x="427.98" y="396.07" width="7.68" height="109.43" fill="#ffc000"/>
<text transform="translate(472.9 520) rotate(-45)" text-anchor="end" font-size="11" fill="#595959" font-family="Liberation Sans">Английский язык</text>
<rect x="452.47" y="434.13" width="7.68" height="71.37" fill="#5b9bd5"/>
<rect x="462.22" y="410.34" width="7.68" height="95.16" fill="#ed7d31" stroke="#7f7f7f" stroke-width="0.9"/>
<rect x="471.96" y="419.86" width="7.68" height="85.64" fill="#a5a5a5"/>
<rect x="481.71" y="400.83" width="7.68" height="104.67" fill="#ffc000"/>
<text transform="translate(526.7 520) rotate(-45)" text-anchor="end" font-size="11" fill="#595959" font-family="Liberation Sans">История</text>
<rect x="506.20" y="410.34" width="7.68" height="95.16" fill="#5b9bd5"/>
<rect x="515.94" y="424.62" width="7.68" height="80.88" fill="#ed7d31" stroke="#7f7f7f" stroke-width="0.9"/>
<rect x="525.69" y="419.86" width="7.68" height="85.64" fill="#a5a5a5"/>
<rect x="535.44" y="396.07" width="7.68" height="109.43" fill="#ffc000"/>
<text transform="translate(580.4 520) rotate(-45)" text-anchor="end" font-size="11" fill="#595959" font-family="Liberation Sans">Биология</text>
<rect x="559.92" y="424.62" width="7.68" height="80.88" fill="#5b9bd5"/>
<rect x="569.67" y="419.86" width="7.68" height="85.64" fill="#ed7d31" stroke="#7f7f7f" stroke-width="0.9"/>
<rect x="579.42" y="415.10" width="7.68" height="90.40" fill="#a5a5a5"/>
<rect x="589.17" y="434.13" width="7.68" height="71.37" fill="#ffc000"/>
<text transform="translate(634.1 520) rotate(-45)" text-anchor="end" font-size="11" fill="#595959" font-family="Liberation Sans">Химия</text>
<rect x="613.65" y="438.89" width="7.68" height="66.61" fill="#5b9bd5"/>
<rect x="623.40" y="419.86" width="7.68" height="85.64" fill="#ed7d31" stroke="#7f7f7f" stroke-width="0.9"/>
<rect x="633.15" y="419.86" width="7.68" height="85.64" fill="#a5a5a5"/>
<rect x="642.89" y="400.83" width="7.68" height="104.67" fill="#ffc000"/>
<text transform="translate(687.8 520) rotate(-45)" text-anchor="end" font-size="11" fill="#595959" font-family="Liberation Sans">Физ-ра</text>
<rect x="667.38" y="448.41" width="7.68" height="57.09" fill="#5b9bd5"/>
<rect x="677.12" y="434.13" width="7.68" height="71.37" fill="#ed7d31" stroke="#7f7f7f" stroke-width="0.9"/>
<rect x="686.87" y="362.77" width="7.68" height="142.73" fill="#a5a5a5"/>
<rect x="696.62" y="429.38" width="7.68" height="76.12" fill="#ffc000"/>
<circle cx="301.03" cy="386.56" r="2.8" fill="#bdd7ee" stroke="#1f82dc" stroke-width="1.2"/>
<circle cx="301.03" cy="505.50" r="2.8" fill="#bdd7ee" stroke="#1f82dc" stroke-width="1.2"/>
<circle cx="308.71" cy="386.56" r="2.8" fill="#bdd7ee" stroke="#1f82dc" stroke-width="1.2"/>
<circle cx="308.71" cy="505.50" r="2.8" fill="#bdd7ee" stroke="#1f82dc" stroke-width="1.2"/>
<circle cx="354.76" cy="319.95" r="2.8" fill="#bdd7ee" stroke="#1f82dc" stroke-width="1.2"/>
<circle cx="354.76" cy="505.50" r="2.8" fill="#bdd7ee" stroke="#1f82dc" stroke-width="1.2"/>
<circle cx="362.44" cy="319.95" r="2.8" fill="#bdd7ee" stroke="#1f82dc" stroke-width="1.2"/>
<circle cx="362.44" cy="505.50" r="2.8" fill="#bdd7ee" stroke="#1f82dc" stroke-width="1.2"/>
<circle cx="408.49" cy="410.34" r="2.8" fill="#bdd7ee" stroke="#1f82dc" stroke-width="1.2"/>
<circle cx="408.49" cy="505.50" r="2.8" fill="#bdd7ee" stroke="#1f82dc" stroke-width="1.2"/>
<circle cx="416.16" cy="410.34" r="2.8" fill="#bdd7ee" stroke="#1f82dc" stroke-width="1.2"/>
<circle cx="416.16" cy="505.50" r="2.8" fill="#bdd7ee" stroke="#1f82dc" stroke-width="1.2"/>
<circle cx="462.22" cy="410.34" r="2.8" fill="#bdd7ee" stroke="#1f82dc" stroke-width="1.2"/>
<circle cx="462.22" cy="505.50" r="2.8" fill="#bdd7ee" stroke="#1f82dc" stroke-width="1.2"/>
<circle cx="469.89" cy="410.34" r="2.8" fill="#bdd7ee" stroke="#1f82dc" stroke-width="1.2"/>
<circle cx="469.89" cy="505.50" r="2.8" fill="#bdd7ee" stroke="#1f82dc" stroke-width="1.2"/>
<circle cx="515.94" cy="424.62" r="2.8" fill="#bdd7ee" stroke="#1f82dc" stroke-width="1.2"/>
<circle cx="515.94" cy="505.50" r="2.8" fill="#bdd7ee" stroke="#1f82dc" stroke-width="1.2"/>
<circle cx="523.62" cy="424.62" r="2.8" fill="#bdd7ee" stroke="#1f82dc" stroke-width="1.2"/>
<circle cx="523.62" cy="505.50" r="2.8" fill="#bdd7ee" stroke="#1f82dc" stroke-width="1.2"/>
<circle cx="569.67" cy="419.86" r="2.8" fill="#bdd7ee" stroke="#1f82dc" stroke-width="1.2"/>
<circle cx="569.67" cy="505.50" r="2.8" fill="#bdd7ee" stroke="#1f82dc" stroke-width="1.2"/>
<circle cx="577.35" cy="419.86" r="2.8" fill="#bdd7ee" stroke="#1f82dc" stroke-width="1.2"/>
<circle cx="577.35" cy="505.50" r="2.8" fill="#bdd7ee" stroke="#1f82dc" stroke-width="1.2"/>
<circle cx="623.40" cy="419.86" r="2.8" fill="#bdd7ee" stroke="#1f82dc" stroke-width="1.2"/>
<circle cx="623.40" cy="505.50" r="2.8" fill="#bdd7ee" stroke="#1f82dc" stroke-width="1.2"/>
<circle cx="631.07" cy="419.86" r="2.8" fill="#bdd7ee" stroke="#1f82dc" stroke-width="1.2"/>
<circle cx="631.07" cy="505.50" r="2.8" fill="#bdd7ee" stroke="#1f82dc" stroke-width="1.2"/>
<circle cx="677.12" cy="434.13" r="2.8" fill="#bdd7ee" stroke="#1f82dc" stroke-width="1.2"/>
<circle cx="677.12" cy="505.50" r="2.8" fill="#bdd7ee" stroke="#1f82dc" stroke-width="1.2"/>
<circle cx="684.80" cy="434.13" r="2.8" fill="#bdd7ee" stroke="#1f82dc" stroke-width="1.2"/>
<circle cx="684.80" cy="505.50" r="2.8" fill="#bdd7ee" stroke="#1f82dc" stroke-width="1.2"/>
<rect x="264.5" y="601" width="6" height="6" fill="#5b9bd5"/>
<text x="273.5" y="608" font-size="10.6" fill="#595959" font-family="Liberation Sans">1 четверть</text>
<rect x="341" y="601" width="6" height="6" fill="#ed7d31"/>
<text x="350" y="608" font-size="10.6" fill="#595959" font-family="Liberation Sans">2 четверть</text>
<rect x="418.8" y="601" width="6" height="6" fill="#a5a5a5"/>
<text x="427.5" y="608" font-size="10.6" fill="#595959" font-family="Liberation Sans">3 четверть</text>
<rect x="495.2" y="601" width="6" height="6" fill="#ffc000"/>
<text x="504.5" y="608" font-size="10.6" fill="#595959" font-family="Liberation Sans">4 четверть</text>
<rect x="91.4" y="243.4" width="635.2" height="381" fill="none" stroke="#8c8c8c" stroke-width="1.5"/>
<circle cx="91.4" cy="243.4" r="4.6" fill="#fff" stroke="#8c8c8c" stroke-width="1.7"/>
<circle cx="91.4" cy="433.9" r="4.6" fill="#fff" stroke="#8c8c8c" stroke-width="1.7"/>
<circle cx="91.4" cy="624.4" r="4.6" fill="#fff" stroke="#8c8c8c" stroke-width="1.7"/>
<circle cx="409" cy="243.4" r="4.6" fill="#fff" stroke="#8c8c8c" stroke-width="1.7"/>
<circle cx="409" cy="624.4" r="4.6" fill="#fff" stroke="#8c8c8c" stroke-width="1.7"/>
<circle cx="726.6" cy="243.4" r="4.6" fill="#fff" stroke="#8c8c8c" stroke-width="1.7"/>
<circle cx="726.6" cy="433.9" r="4.6" fill="#fff" stroke="#8c8c8c" stroke-width="1.7"/>
<circle cx="726.6" cy="624.4" r="4.6" fill="#fff" stroke="#8c8c8c" stroke-width="1.7"/>
<rect x="740.5" y="242.5" width="27" height="27" fill="#fff" stroke="#ababab" stroke-width="1"/>
<rect x="740.5" y="280.5" width="27" height="27" fill="#fff" stroke="#ababab" stroke-width="1"/>
<rect x="740.5" y="318.5" width="27" height="27" fill="#fff" stroke="#ababab" stroke-width="1"/>
<rect x="740.5" y="356.5" width="27" height="27" fill="#fff" stroke="#ababab" stroke-width="1"/>
<g stroke="#3f77b8" stroke-width="1.2"><line x1="744" y1="247.5" x2="764" y2="247.5"/><line x1="744" y1="250.5" x2="764" y2="250.5"/><line x1="744" y1="253.5" x2="747" y2="253.5"/><line x1="761" y1="253.5" x2="764" y2="253.5"/><line x1="744" y1="256.5" x2="747" y2="256.5"/><line x1="761" y1="256.5" x2="764" y2="256.5"/><line x1="744" y1="259.5" x2="747" y2="259.5"/><line x1="761" y1="259.5" x2="764" y2="259.5"/><line x1="744" y1="262.5" x2="764" y2="262.5"/><line x1="744" y1="265.5" x2="764" y2="265.5"/></g>
<path d="M747.9 259.9V259.25A6.15 6.15 0 0 1 760.2 259.25V259.9H757.1V259.25A3.05 3.05 0 0 0 751 259.25V259.9Z" fill="#6a6a6a"/>
<path d="M751.7 287h4.6v4.6h4.7v4.6h-4.7v4.7h-4.6v-4.7h-4.6v-4.6h4.6z" fill="#5a9e82"/>
<path d="M763 323v5.5l-3.8 3.8-2.9-2.9z M755.6 330.1l2.9 2.9-1.3 1.3-2.9-2.9z" fill="#6e6e6e"/>
<path d="M745.3 339.8C748 336.5 750.5 333.5 753.3 332.6 755.5 332 757.2 333.6 756.3 335.6 755 338.2 750 339.5 745.3 339.8z" fill="#3f77b8"/>
<path d="M751.8 335.5a1.6 1.6 0 0 1 3-.6" fill="none" stroke="#fff" stroke-width="1.1"/>
<path d="M745 362H763L756 371V378H752V371Z" fill="#6e6e6e"/>
<path d="M746.9 363.1L753.7 370.7V376.9" fill="none" stroke="#fff" stroke-width="1.2"/>
</svg>

<!-- ===== ANNOTATIONS ===== -->
<svg style="left:0;top:0" width="871" height="731" viewBox="0 0 871 731">
<defs>
<filter id="sh" x="-30%" y="-30%" width="160%" height="170%"><feDropShadow dx="1.5" dy="3" stdDeviation="2.5" flood-color="#000" flood-opacity="0.45"/></filter>
<filter id="sh2" x="-10%" y="-20%" width="120%" height="150%"><feDropShadow dx="1.5" dy="3.5" stdDeviation="2.2" flood-color="#000" flood-opacity="0.45"/></filter>
<filter id="sh3" x="-10%" y="-10%" width="120%" height="130%"><feDropShadow dx="0.5" dy="1.5" stdDeviation="1.5" flood-color="#000" flood-opacity="0.3"/></filter>
</defs>
<!-- watermark -->
<g opacity="0.85">
<rect x="22.5" y="655.5" width="64" height="50" rx="6" fill="#fff" fill-opacity="0.35" stroke="#c4c4c4" stroke-width="1"/>
<rect x="27" y="659.5" width="55" height="42" rx="4" fill="none" stroke="#a2a2a2" stroke-width="3.5"/>
<rect x="43" y="705.5" width="19" height="4" rx="1.5" fill="none" stroke="#bdbdbd" stroke-width="1"/>
<path d="M31 662.5l11.5 3.5-3.4 3.4 15.2 15.2-2.6 2.6-15.2-15.2-3.4 3.4z" fill="#999"/>
<g fill="none" stroke-linecap="round" stroke-linejoin="round">
<path d="M102 672.5H106.2Q111.2 672.5 111.2 677.5V682.8Q111.2 687.8 106.2 687.8H102Q97 687.8 97 682.8V677.5Q97 672.5 102 672.5ZM142.2 672.5H124.7Q120.2 672.5 120.2 676.3Q120.2 680.2 124.7 680.2H137.7Q142.2 680.2 142.2 684Q142.2 687.8 137.7 687.8H120.2" stroke="#a8a8a8" stroke-width="7.8"/>
<path d="M102 672.5H106.2Q111.2 672.5 111.2 677.5V682.8Q111.2 687.8 106.2 687.8H102Q97 687.8 97 682.8V677.5Q97 672.5 102 672.5ZM142.2 672.5H124.7Q120.2 672.5 120.2 676.3Q120.2 680.2 124.7 680.2H137.7Q142.2 680.2 142.2 684Q142.2 687.8 137.7 687.8H120.2" stroke="#fbb0c0" stroke-width="5.8"/>
<path id="hp" d="M160.5 671.2V688.5M180.8 671.2V688.5M160.5 680H180.8M188 682H206V680Q206 677.5 203.5 677.5H190.5Q188 677.5 188 680V686Q188 688.5 190.5 688.5H206M213.7 671.2V688.5M220.2 694.2V680Q220.2 677.5 222.7 677.5H235.7Q238.2 677.5 238.2 680V686Q238.2 688.5 235.7 688.5H220.2M244.3 682H262.3V680Q262.3 677.5 259.8 677.5H246.8Q244.3 677.5 244.3 680V686Q244.3 688.5 246.8 688.5H262.3M267.3 688.5V680Q267.3 677.5 269.8 677.5H276.1" stroke="#a8a8a8" stroke-width="6.4"/>
<path d="M160.5 671.2V688.5M180.8 671.2V688.5M160.5 680H180.8M188 682H206V680Q206 677.5 203.5 677.5H190.5Q188 677.5 188 680V686Q188 688.5 190.5 688.5H206M213.7 671.2V688.5M220.2 694.2V680Q220.2 677.5 222.7 677.5H235.7Q238.2 677.5 238.2 680V686Q238.2 688.5 235.7 688.5H220.2M244.3 682H262.3V680Q262.3 677.5 259.8 677.5H246.8Q244.3 677.5 244.3 680V686Q244.3 688.5 246.8 688.5H262.3M267.3 688.5V680Q267.3 677.5 269.8 677.5H276.1" stroke="#fbfbfb" stroke-width="4.4"/>
</g>
</g>
<!-- red rectangle -->
<rect x="471.8" y="30.6" width="94.4" height="36.3" fill="none" stroke="#f24444" stroke-width="3.4" filter="url(#sh3)"/>
<!-- arrow -->
<path d="M241.96 234.97L425.8 134.1L421.9 125.8L454.8 124L436 150.8L430.8 143.4L247.04 244.23Z" fill="#f74545" filter="url(#sh2)"/>
<!-- circle 1 -->
<circle cx="589.5" cy="44" r="30" fill="#0dac8e" filter="url(#sh)"/>
<path d="M589.8 28.1H594.1V60H589.5V35.4L581.8 40V36.1Z" fill="#fff"/>
<!-- circle 2 -->
<circle cx="244.5" cy="239.3" r="30" fill="#0dac8e" filter="url(#sh)"/>
<text x="244" y="255.4" font-size="45" fill="#fff" stroke="#fff" stroke-width="1.3" text-anchor="middle" font-family="Liberation Sans">2</text>
</svg>

<!-- ===== STATUS BAR ===== -->
<div class="t" style="left:10px;top:713px;font-size:11px;color:#444">Страница 1 из 1</div>
<div class="t" style="left:114px;top:713px;font-size:11px;color:#444">Число слов: 0</div>
<svg style="left:202px;top:711px" width="16" height="15" viewBox="0 0 16 15">
<path d="M1.5 1.5h5.5l1.5 1.5v10.5l-1.5-1h-5.5z" fill="none" stroke="#666" stroke-width="1.1"/>
<path d="M8.5 3l1.5-1.5h4.5v3.5M14.5 9.5v3h-4.5l-1.5 1" fill="none" stroke="#666" stroke-width="1.1"/>
<path d="M9.5 7.5l2 2 3.5-4" fill="none" stroke="#666" stroke-width="1.2"/>
<path d="M8.5 13.5v1" stroke="#666" stroke-width="1"/>
</svg>
<div class="t" style="left:234px;top:713px;font-size:11px;color:#444">русский</div>
<!-- view buttons -->
<svg style="left:578px;top:711px" width="16" height="15" viewBox="0 0 16 15">
<path d="M1 1.5h5.5l1.5 1 1.5-1h5.5v11h-5.5l-1.5 1-1.5-1h-5.5z" fill="none" stroke="#666" stroke-width="1.1"/>
<path d="M8 2.5v11.5" stroke="#666" stroke-width="1"/>
<g stroke="#777" stroke-width="0.9"><path d="M2.5 4.5h4M2.5 6.5h4M2.5 8.5h4M2.5 10.5h4M9.5 4.5h4M9.5 6.5h4M9.5 8.5h4M9.5 10.5h4"/></g>
</svg>
<div class="a" style="left:605px;top:709px;width:38px;height:21px;background:#c8c8c8"></div>
<svg style="left:616px;top:711px" width="16" height="16" viewBox="0 0 16 16">
<rect x="1.5" y="1.5" width="13" height="12.5" fill="none" stroke="#555" stroke-width="1.3"/>
<g stroke="#666" stroke-width="1"><path d="M3.5 4.5h9M3.5 6.5h9M3.5 8.5h9M3.5 10.5h9M3.5 12h9"/></g>
</svg>
<svg style="left:654px;top:711px" width="17" height="16" viewBox="0 0 17 16">
<path d="M1.5 1.5h12v5M8 13.5h-6.5v-12" fill="none" stroke="#666" stroke-width="1.1"/>
<g stroke="#777" stroke-width="0.9"><path d="M3.5 4.5h8M3.5 6.5h7M3.5 8.5h4M3.5 10.5h4"/></g>
<circle cx="12" cy="11" r="3.8" fill="#666"/>
<path d="M10 9.5c1 .3 1.6 1 1.4 2.2M12.5 8c.5 1 1.6 1.4 2.4 1.2M11.5 14c.3-1 1.2-1.6 2.2-1.6" fill="none" stroke="#f1f1f1" stroke-width="0.9"/>
</svg>
<div class="a" style="left:686px;top:718px;width:6px;height:2px;background:#555"></div>
<div class="a" style="left:696px;top:718px;width:100px;height:1px;background:#999"></div>
<div class="a" style="left:744px;top:713px;width:4px;height:11px;background:#666"></div>
<svg style="left:799px;top:713px" width="10" height="11" viewBox="0 0 10 11"><path d="M5 1v9M0.8 5.5h8.4" stroke="#555" stroke-width="2"/></svg>
<div class="t" style="left:824px;top:713px;font-size:11px;color:#444">100%</div>

</body></html>
